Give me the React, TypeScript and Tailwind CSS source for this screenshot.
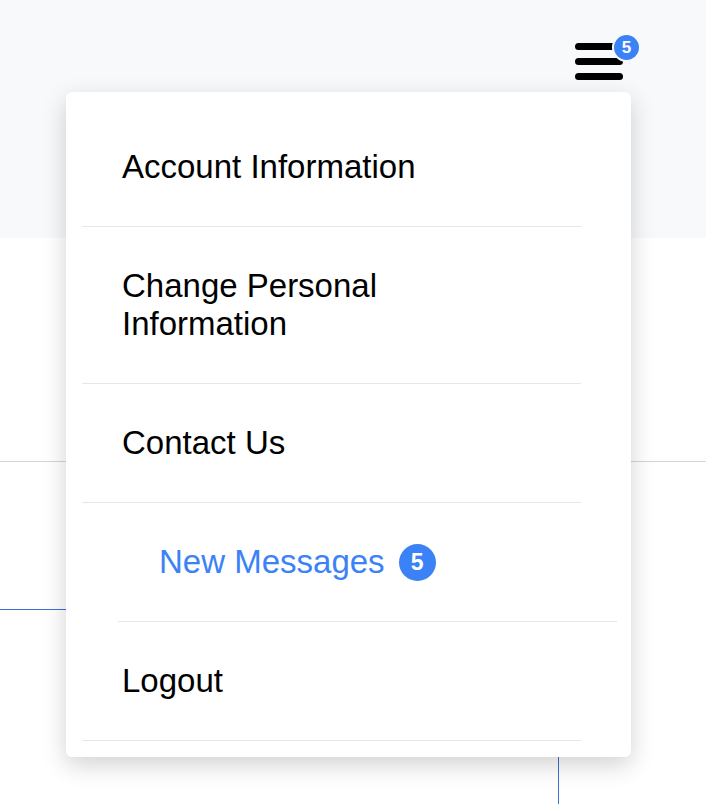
import React from 'react'

const items = [
  { label: 'Account Information' },
  { label: 'Change Personal Information' },
  { label: 'Contact Us' },
]

export default function App() {
  return (
    <div className="relative min-h-[804px] overflow-hidden bg-white font-['Liberation_Sans',Arial,sans-serif]">
      {/* Header */}
      <header className="flex h-[238px] items-start justify-end bg-[#f8f9fb] pr-[83px] pt-[43px]">
        <button className="relative flex w-12 flex-col gap-[8px]" aria-label="Menu">
          <span className="block h-[7px] w-12 rounded-full bg-black" />
          <span className="block h-[7px] w-12 rounded-full bg-black" />
          <span className="block h-[7px] w-12 rounded-full bg-black" />
          <span className="absolute left-[39px] top-[-8px] flex h-[25px] w-[25px] items-center justify-center rounded-full bg-[#3b82f6] text-[17px] font-bold leading-none text-white ring-2 ring-[#f8f9fb]">
            5
          </span>
        </button>
      </header>

      {/* Page content behind the menu */}
      <div className="h-[224px] border-b border-[#d4d4d4]" />
      <div className="h-[147px]" />
      <div className="ml-[-20px] h-[220px] w-[579px] border-r border-t border-[#3b6fd8]" />

      {/* Dropdown */}
      <div className="absolute left-[66px] top-[92px] w-[565px] rounded-md bg-white py-4 shadow-[0_8px_24px_rgba(0,0,0,0.18)]">
        {items.map((item) => (
          <div
            key={item.label}
            className="ml-4 mr-[50px] border-b border-[#e5e5ea] py-10 pl-[40px] pr-[41px] text-[33px] leading-[38px] text-black"
          >
            {item.label}
          </div>
        ))}
        <div className="ml-[52px] mr-[14px] flex items-center border-b border-[#e5e5ea] py-10 pl-[41px] text-[33px] leading-[38px] text-[#3b82f6]">
          <span>New Messages</span>
          <span className="ml-[14px] flex h-[37px] w-[37px] items-center justify-center rounded-full bg-[#3b82f6] text-[23px] font-bold leading-none text-white">
            5
          </span>
        </div>
        <div className="ml-4 mr-[50px] border-b border-[#e5e5ea] py-10 pl-[40px] pr-[41px] text-[33px] leading-[38px] text-black">
          Logout
        </div>
      </div>
    </div>
  )
}
